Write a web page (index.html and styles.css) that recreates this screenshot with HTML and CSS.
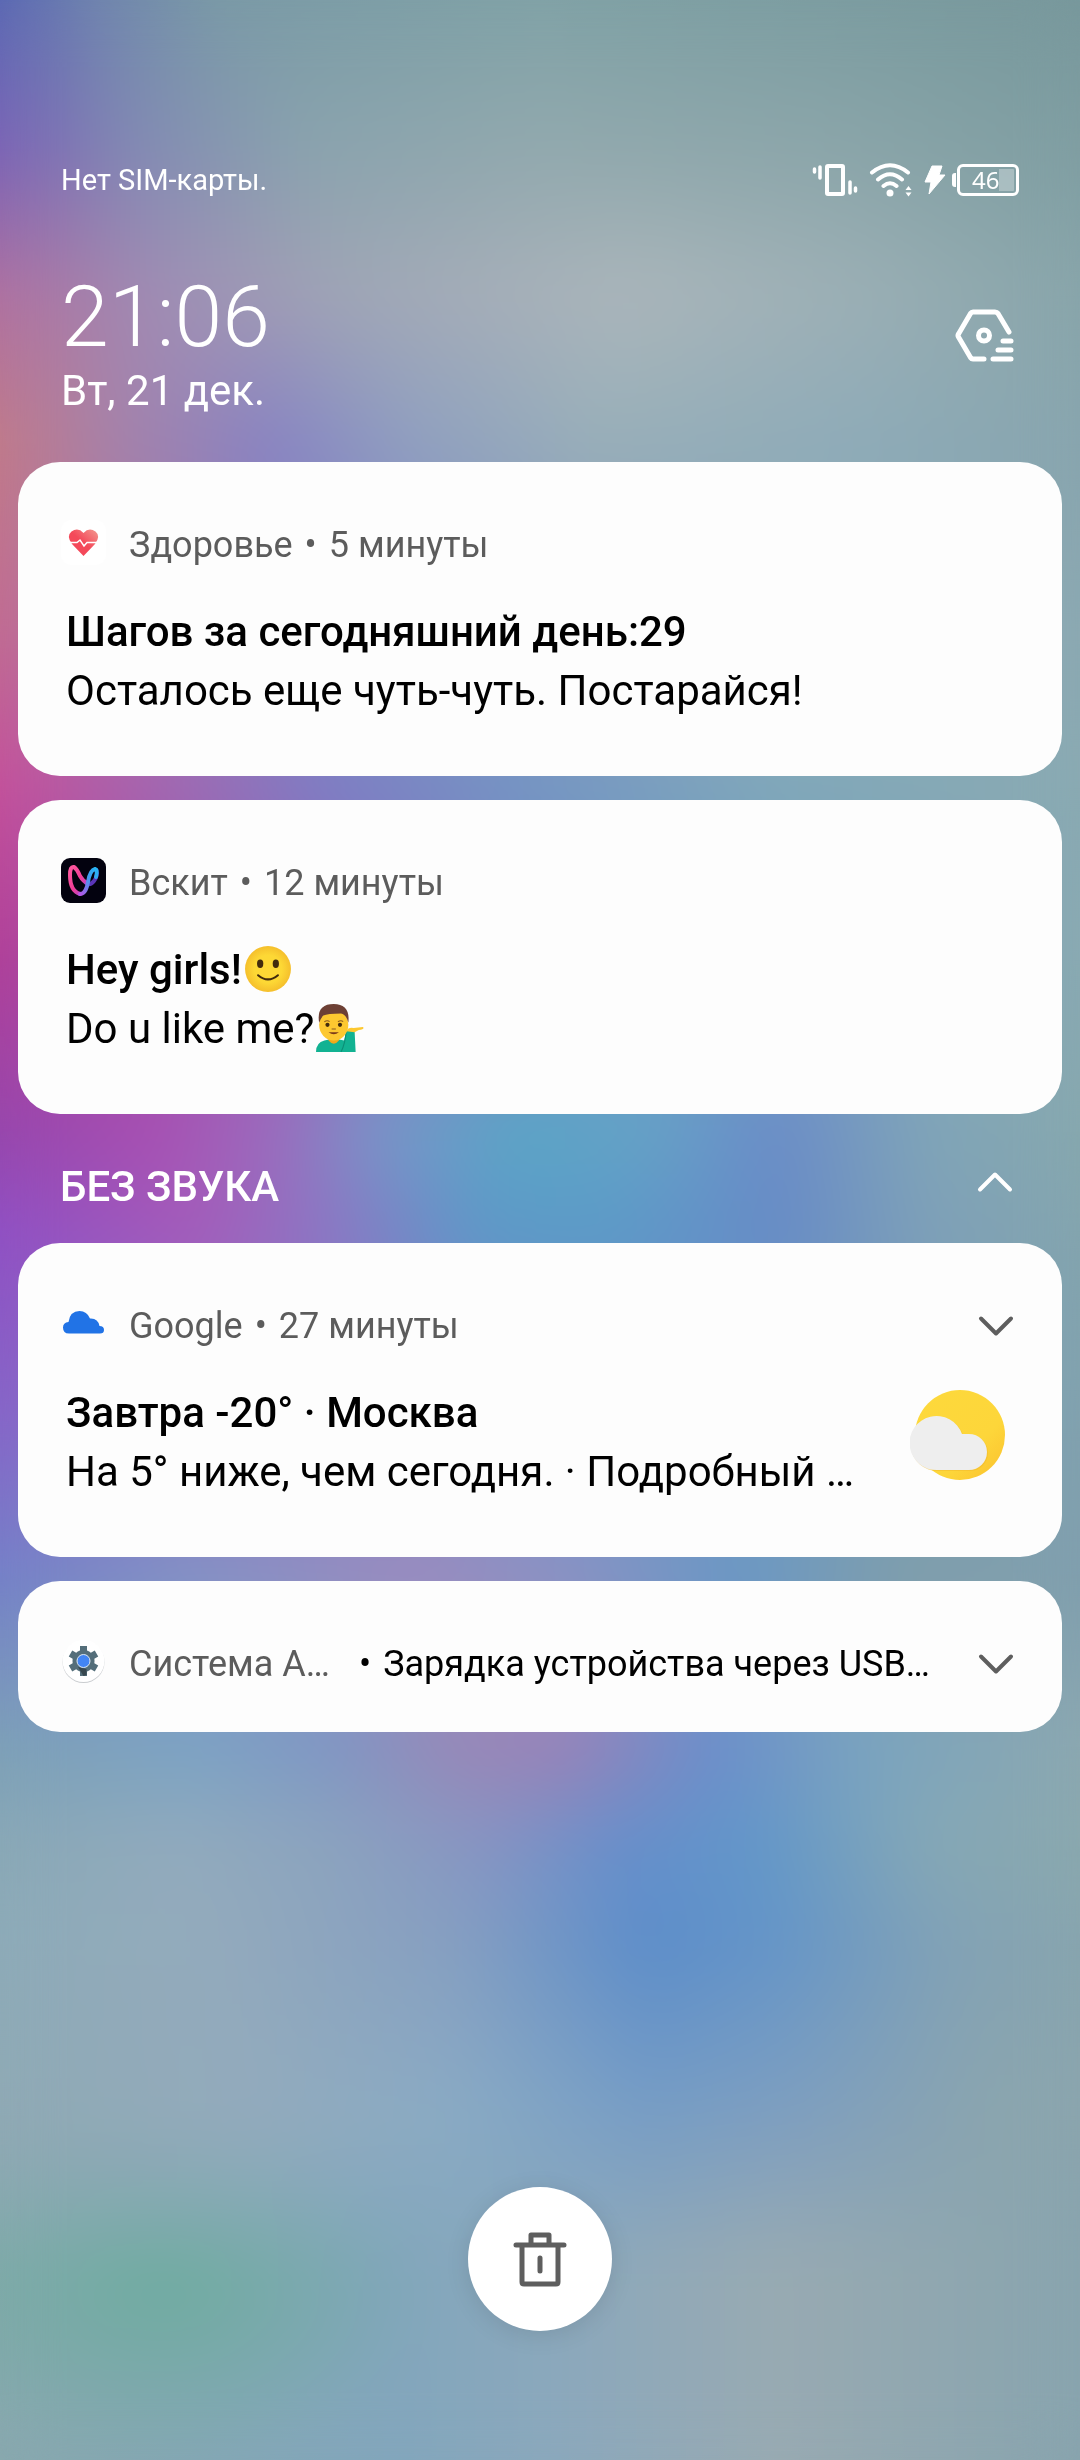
FILE: index.html
```html
<!DOCTYPE html>
<html lang="ru">
<head>
  <meta charset="UTF-8">
  <meta name="viewport" content="width=device-width, initial-scale=1.0">
  <title>Уведомления</title>
  <link rel="stylesheet" href="styles.css">
</head>
<body>
  <div class="wallpaper" aria-hidden="true">
    <div class="wash w1"></div>
    <div class="wash w2"></div>
    <div class="wash w3"></div>
    <div class="wash w4"></div>
    <div class="wash w5"></div>
    <div class="wash w6"></div>
    <div class="wash w7"></div>
    <div class="wash w8"></div>
    <div class="wash w9"></div>
    <div class="wash w10"></div>
    <div class="wash w11"></div>
    <div class="wash w12"></div>
    <div class="wash w13"></div>
    <div class="wash w14"></div>
    <div class="wash w15"></div>
  </div>

  <header class="top">
    <div class="status">
      <span>Нет SIM-карты.</span>
      <div class="status-icons">
        <svg width="46" height="34" viewBox="0 0 46 34" fill="none" stroke="#fff" stroke-linecap="round">
          <rect x="15" y="3" width="16" height="28" rx="1" stroke-width="4"/>
          <path d="M2.500 6v3M8 4v11M38 19v11M43.500 25v3" stroke-width="3.500"/>
        </svg>
        <svg width="44" height="36" viewBox="0 0 44 36" fill="none" stroke="#fff" stroke-width="4" stroke-linecap="round">
          <path d="M3 10.500Q21-4 39 10.500M9 17.500Q21 7 33 17.500M14.500 24Q21 18.500 27.500 24"/>
          <circle cx="21" cy="31" r="3.500" fill="#fff" stroke="none"/>
          <path d="M36.500 28l3-4 3 4zM36.500 30.500l3 4 3-4z" fill="#fff" stroke="none"/>
        </svg>
        <svg width="22" height="30" viewBox="0 0 22 30">
          <path d="M8 1h10l-3 9h6L5 29l2-12H1z" fill="#fff" stroke="#fff" stroke-linejoin="round"/>
        </svg>
        <div class="battery"><span>46</span></div>
      </div>
    </div>
    <div class="clock-row">
      <div>
        <div class="clock">21:06</div>
        <div class="date">Вт, 21 дек.</div>
      </div>
      <button class="icon-btn settings" aria-label="Настройки">
        <svg width="60" height="54" viewBox="0 0 60 54" fill="none" stroke="#fff" stroke-width="5" stroke-linecap="round" stroke-linejoin="round">
          <path d="M54 23L43 4.500Q42 3 40 3H18Q16.500 3 15.500 4.500L3.500 25Q2.500 26.500 3.500 28L15.500 48.500Q16.500 50 18 50H29"/>
          <circle cx="29" cy="26.500" r="5.500"/>
          <path d="M48 32h8M43 41h13M38 50h18"/>
        </svg>
      </button>
    </div>
  </header>

  <main class="list">
    <article class="card">
      <div class="card-head">
        <svg class="app-icon" viewBox="0 0 45 45">
          <defs>
            <linearGradient id="heart" x1="0" y1="1" x2="1" y2="0">
              <stop offset="0.500" stop-color="#f4495a"/>
              <stop offset="1" stop-color="#f29a90"/>
            </linearGradient>
          </defs>
          <rect width="45" height="45" rx="10" fill="#fff"/>
          <path d="M22.500 36L11 24Q5 16 10.500 11.500Q17 7 22.500 13Q28 7 34.500 11.500Q40 16 34 24Z" fill="url(#heart)"/>
          <path d="M8 22.500h8l3-2.500 4 6 3-3.500h11" fill="none" stroke="#fff" stroke-width="1.500"/>
        </svg>
        <span class="app">Здоровье</span><span class="dot">•</span><span class="time">5 минуты</span>
      </div>
      <h2>Шагов за сегодняшний день:29</h2>
      <p>Осталось еще чуть-чуть. Постарайся!</p>
    </article>

    <article class="card">
      <div class="card-head">
        <svg class="app-icon" viewBox="0 0 45 45" fill="none">
          <defs>
            <linearGradient id="loop-a" x1="0" y1="0" x2="1" y2="1">
              <stop offset="0" stop-color="#ff5aa0"/>
              <stop offset="0.500" stop-color="#f03c96"/>
              <stop offset="1" stop-color="#9b4be0"/>
            </linearGradient>
            <linearGradient id="loop-b" x1="0" y1="1" x2="1" y2="0">
              <stop offset="0" stop-color="#b456e6"/>
              <stop offset="0.600" stop-color="#3f9cf0"/>
              <stop offset="1" stop-color="#25b6f5"/>
            </linearGradient>
          </defs>
          <rect width="45" height="45" rx="9" fill="#03020f"/>
          <g stroke-width="4" stroke-linecap="round">
            <path d="M25 25Q29 28 33 23Q37 18 35.500 12" stroke="#5a35b8"/>
            <path d="M19 36Q9 33 9 17Q9 8 13 9Q16 11 19 18Q22 23 26 25" stroke="url(#loop-a)"/>
            <path d="M19 36Q25 36 27 24Q29 12 34 11Q37 12 35 19" stroke="url(#loop-b)"/>
          </g>
        </svg>
        <span class="app">Вскит</span><span class="dot">•</span><span class="time">12 минуты</span>
      </div>
      <h2>Hey girls!<svg class="emoji" viewBox="0 0 46 46" role="img" aria-label="улыбка">
          <defs>
            <radialGradient id="face">
              <stop offset="0.600" stop-color="#fdd835"/>
              <stop offset="1" stop-color="#f5bf2c"/>
            </radialGradient>
          </defs>
          <circle cx="23" cy="23" r="22" fill="url(#face)"/>
          <ellipse cx="15.500" cy="18" rx="3" ry="4" fill="#422b0d"/>
          <ellipse cx="30.500" cy="18" rx="3" ry="4" fill="#422b0d"/>
          <path d="M13.500 29Q23 37 32.500 29" fill="none" stroke="#422b0d" stroke-width="2" stroke-linecap="round"/>
        </svg></h2>
      <p>Do u like me?<svg class="emoji" viewBox="0 0 46 46" role="img" aria-label="мужчина">
          <path d="M0 46Q0 37 8 35L17 33L27 35L29 25L37 26L38 46Z" fill="#12b292"/>
          <path d="M29 26Q28 38 24 46" fill="none" stroke="#0c8f76"/>
          <path d="M12 30h10v5q-5 6-10 0z" fill="#f0a91a"/>
          <path d="M29 26Q31 22 36 23L45 22Q47 24 41 25L37 27Z" fill="#fdc830"/>
          <ellipse cx="17" cy="20" rx="14" ry="15" fill="#fdc830"/>
          <path d="M3 18Q0 0 17 0Q33 0 31 18Q29 10 24 9Q11 9 7 11Q5 13 3 18Z" fill="#6d4035"/>
          <circle cx="11" cy="20" r="2" fill="#422b0d"/>
          <circle cx="23" cy="20" r="2" fill="#422b0d"/>
          <path d="M8 17q3-2 5 0M21 17q3-2 5 0M15 24h4" stroke="#8a5a20" fill="none"/>
          <path d="M12 27Q17 31 22 27Z" fill="#7a3a1a"/>
        </svg></p>
    </article>

    <div class="section">
      <h1>БЕЗ ЗВУКА</h1>
      <button class="icon-btn" aria-label="Свернуть">
        <svg width="36" height="22" viewBox="0 0 36 22"><path d="M3 18.500L18 3.500L33 18.500"/></svg>
      </button>
    </div>

    <article class="card">
      <div class="card-head">
        <svg class="app-icon" viewBox="0 0 45 45">
          <path d="M8 32.500Q2 32.500 2 26.500Q2 21.500 7.500 21Q9 10 18.500 10Q26 10 29 17.500Q37 17 38.500 25Q43 25 43 29Q43 32.500 39 32.500Z" fill="#2173e6"/>
        </svg>
        <span class="app">Google</span><span class="dot">•</span><span class="time">27 минуты</span>
        <button class="icon-btn expand" aria-label="Развернуть">
          <svg width="36" height="22" viewBox="0 0 36 22"><path d="M3 3.500L18 18.500L33 3.500"/></svg>
        </button>
      </div>
      <div class="weather">
        <div class="weather-text">
          <h2>Завтра -20° · Москва</h2>
          <p>На 5° ниже, чем сегодня. · Подробный …</p>
        </div>
        <svg width="96" height="92" viewBox="0 0 96 92">
          <defs>
            <linearGradient id="sun" x1="0" y1="0" x2="1" y2="1">
              <stop offset="0" stop-color="#fdd93c"/>
              <stop offset="0.650" stop-color="#fdd63a"/>
              <stop offset="1" stop-color="#fbc02d"/>
            </linearGradient>
          </defs>
          <circle cx="50" cy="46" r="45" fill="url(#sun)"/>
          <path d="M28 82A27 27 0 1 1 53 46H60A18 18 0 0 1 60 82Z" fill="#f2b92c" opacity="0.500"/>
          <path d="M27 81A27 27 0 1 1 52 45H59A18 18 0 0 1 59 81Z" fill="#eee"/>
        </svg>
      </div>
    </article>

    <article class="card">
      <div class="card-head">
        <svg class="app-icon" viewBox="0 0 45 45">
          <circle cx="22.500" cy="23" r="21" fill="#c9cccf"/>
          <circle cx="22.500" cy="22" r="21" fill="#fff"/>
          <circle cx="22.500" cy="22" r="11" fill="#546e7a"/>
          <path d="M22.500 7v30M9.500 14.500l26 15M9.500 29.500l26-15" stroke="#546e7a" stroke-width="7"/>
          <path d="M17 28l5.500 9 3-1v-6z" fill="#37474f"/>
          <circle cx="22.500" cy="22" r="6.500" fill="#4285f4" stroke="#dce8f5" stroke-width="1"/>
        </svg>
        <span class="app app-short">Система A…</span><span class="dot dark">•</span><span class="summary">Зарядка устройства через USB…</span>
        <button class="icon-btn expand" aria-label="Развернуть">
          <svg width="36" height="22" viewBox="0 0 36 22"><path d="M3 3.500L18 18.500L33 3.500"/></svg>
        </button>
      </div>
    </article>
  </main>

  <footer class="bottom">
    <button class="clear" aria-label="Очистить все">
      <svg width="54" height="56" viewBox="0 0 54 56" fill="none" stroke="#5e5e5e" stroke-width="5" stroke-linecap="round" stroke-linejoin="round">
        <path d="M3 14h48M9 14v37q0 2 2 2h32q2 0 2-2V14M18 14V4h18v10M27 27v13"/>
      </svg>
    </button>
  </footer>
</body>
</html>
```

FILE: styles.css
```css
* {
  box-sizing: border-box;
}
body {
  position: relative;
  display: flex;
  flex-direction: column;
  min-height: 100vh;
  margin: 0;
  padding: 164px 18px 129px;
  font-family: Roboto, "Noto Sans", sans-serif;
  font-size: 42px;
  line-height: 59px;
  color: #000;
}
h1, h2, p {
  margin: 0;
  font-size: 42px;
}
h1, h2 {
  font-weight: 500;
}
svg {
  display: block;
  flex: none;
}

/* wallpaper: horizontal colour bands, each one fading in over the last */
.wallpaper, .wash {
  position: absolute;
  inset: 0;
  z-index: -1;
}
.wallpaper {
  overflow: hidden;
  background: linear-gradient(90deg, #5a68b4, #6f85ae 9%, #7a9aa6 20%, #80a2a6 50%, #78989c);
}
.wallpaper::after {
  content: "";
  position: absolute;
  inset: 0;
  backdrop-filter: blur(28px);
}
.w1 {
  background: linear-gradient(90deg, #7b62b6, #8289b4 12%, #8aa3ae 28%, #92a9ae 50%, #8ca6aa 75%, #7f9ea2);
  mask-image: linear-gradient(transparent 0%, #000 6%);
}
.w2 {
  background: linear-gradient(90deg, #b070a0, #a08cb4 14%, #a0a6b6 32%, #abb6bb 58%, #9bafb5 80%, #88a5aa);
  mask-image: linear-gradient(transparent 6%, #000 12%);
}
.w3 {
  background: linear-gradient(90deg, #c27a88, #a582aa 11%, #8783c3 25%, #8f9fc0 38%, #98afb9 55%, #8eabb8 80%, #88a5ae);
  mask-image: linear-gradient(transparent 12%, #000 18%);
}
.w4 {
  background: linear-gradient(90deg, #c26a92, #8783c3 30%, #8ca9b8 70%, #8ca9b2);
  mask-image: linear-gradient(transparent 18%, #000 26%);
}
.w5 {
  background: linear-gradient(90deg, #c5509a, #a565b0 14%, #7d7ec4 30%, #7395c4 48%, #80a8ba 72%, #8aaab2);
  mask-image: linear-gradient(transparent 26%, #000 32%);
}
.w6 {
  background: linear-gradient(90deg, #b04099, #9560b8 30%, #6c98c4 60%, #8aaab2);
  mask-image: linear-gradient(transparent 32%, #000 39%);
}
.w7 {
  background: linear-gradient(90deg, #9646ac, #a84fb2 14%, #9c6bbd 25%, #7896c8 35%, #5aa6c6 48%, #66a2c6 60%, #6b8cc8 72%, #80a5b8 86%, #87a8ae);
  mask-image: linear-gradient(transparent 39%, #000 46%);
}
.w8 {
  background: linear-gradient(90deg, #8f50c4, #a55cba 18%, #8a78c4 31%, #5e98c8 44%, #5b9bc8 55%, #678bc6 72%, #7ea0b8 86%, #84a5ae);
  mask-image: linear-gradient(transparent 46%, #000 50%);
}
.w9 {
  background: linear-gradient(90deg, #8567c8, #8a78c4 30%, #6c98c4 70%, #82a2ae);
  mask-image: linear-gradient(transparent 50%, #000 58%);
}
.w10 {
  background: linear-gradient(90deg, #7480c8, #8492c5 17%, #9b8dbf 38%, #8a94c4 52%, #6b98c4 68%, #809eaa 84%, #809fae);
  mask-image: linear-gradient(transparent 58%, #000 64%);
}
.w11 {
  background: linear-gradient(90deg, #7da0b7, #7ba3c4 18%, #7f96c4 31%, #9987b7 43%, #9a82b8 52%, #6c8ecb 66%, #7aa4c0 80%, #8ca8b0);
  mask-image: linear-gradient(transparent 64%, #000 71%);
}
.w12 {
  background: linear-gradient(90deg, #89a8b6, #92abbd 16%, #8ca4be 30%, #8694c3 45%, #668fcb 58%, #6297c9 70%, #85a8b6 86%, #8aa8ae);
  mask-image: linear-gradient(transparent 71%, #000 75%);
}
.w13 {
  background: linear-gradient(90deg, #8dabb8, #94abbc 18%, #869fc1 42%, #5c8dca 60%, #6595c8 72%, #82a2b6 88%, #88a5ae);
  mask-image: linear-gradient(transparent 75%, #000 79%);
}
.w14 {
  background: linear-gradient(90deg, #8fa9b4, #93abbc 22%, #8aabc4 42%, #779dc5 60%, #7f9fbf 74%, #8ba5ae 92%, #8ba5ae);
  mask-image: linear-gradient(transparent 79%, #000 86%);
}
.w15 {
  background:
    radial-gradient(ellipse 24% 7% at 15% 93%, #6faca0, #6faca000),
    linear-gradient(90deg, #88a8ae, #82a6bc 36%, #8ba8bc 52%, #98aab2 72%, #88a4ae);
  mask-image: linear-gradient(transparent 86%, #000 92%);
}

.top {
  padding: 0 43px 47px;
  color: #fff;
}
.status, .status-icons, .clock-row, .card-head, .section, .weather {
  display: flex;
}
.status {
  justify-content: space-between;
  align-items: center;
  height: 32px;
  font-size: 29px;
  line-height: 32px;
}
.status-icons {
  align-items: center;
  gap: 11px;
}
.battery {
  position: relative;
  width: 62px;
  height: 32px;
  padding: 2px;
  border: 3px solid #fff;
  border-radius: 6px;
  background: linear-gradient(90deg, transparent 72%, #ffffff4d 72%) content-box;
  font-family: "Noto Sans", sans-serif;
  font-size: 24px;
  line-height: 22px;
  text-indent: 10px;
}
.battery span {
  display: block;
}
.battery::before {
  content: "";
  position: absolute;
  left: -8px;
  top: 6px;
  width: 4px;
  height: 14px;
  border-radius: 3px 0 0 3px;
  background: #fff;
}
.clock-row {
  justify-content: space-between;
  padding-top: 71px;
}
.clock {
  font-size: 86px;
  font-weight: 300;
  line-height: 100px;
}
.date {
  line-height: 48px;
}
.icon-btn {
  flex: none;
  padding: 0;
  border: 0;
  background: none;
  align-self: flex-start;
}
.settings {
  margin: 42px 4px 0 0;
}

.card {
  margin-bottom: 24px;
  padding: 58px 49px 56px 48px;
  border-radius: 42px;
  background: #fdfdfd;
}
.card:last-child {
  margin-bottom: 0;
  padding-bottom: 42px;
}
.card-head {
  margin: 0 0 31px -5px;
  font-size: 36px;
  line-height: 51px;
  color: #5c5c5c;
  white-space: nowrap;
}
.card:last-child .card-head {
  margin-bottom: 0;
}
.app-icon {
  width: 45px;
  height: 45px;
  margin-right: 23px;
}
.dot {
  margin: 0 12px;
}
.dark, .summary {
  color: #000;
}
.app-short {
  width: 218px;
}
.icon-btn path {
  fill: none;
}
.expand {
  margin: 14px -1px 0 auto;
}
.expand svg, .section svg {
  stroke: #5e5e5e;
  stroke-width: 4;
  stroke-linecap: round;
  stroke-linejoin: round;
}
.emoji {
  display: inline-block;
  width: 48px;
  height: 48px;
  margin-left: 2px;
  vertical-align: -9px;
}
.card h2, .card p {
  height: 59px;
}
.weather {
  justify-content: space-between;
}
.weather > svg {
  margin: 6px 7px 0 0;
}
.weather-text {
  flex: 1;
  min-width: 0;
  white-space: nowrap;
}

.section {
  justify-content: space-between;
  margin-top: -24px;
  padding: 49px 49px 32px 42px;
  color: #fff;
}
.section h1 {
  line-height: 48px;
}
.section .icon-btn {
  margin-top: 8px;
}
.section svg {
  stroke: #fff;
}

.bottom {
  display: flex;
  justify-content: center;
  margin-top: auto;
  padding-top: 48px;
}
.clear {
  display: flex;
  justify-content: center;
  align-items: center;
  width: 144px;
  height: 144px;
  padding: 0;
  border: 0;
  border-radius: 50%;
  background: #fff;
  box-shadow: 0 4px 24px #0000001a;
}
```
